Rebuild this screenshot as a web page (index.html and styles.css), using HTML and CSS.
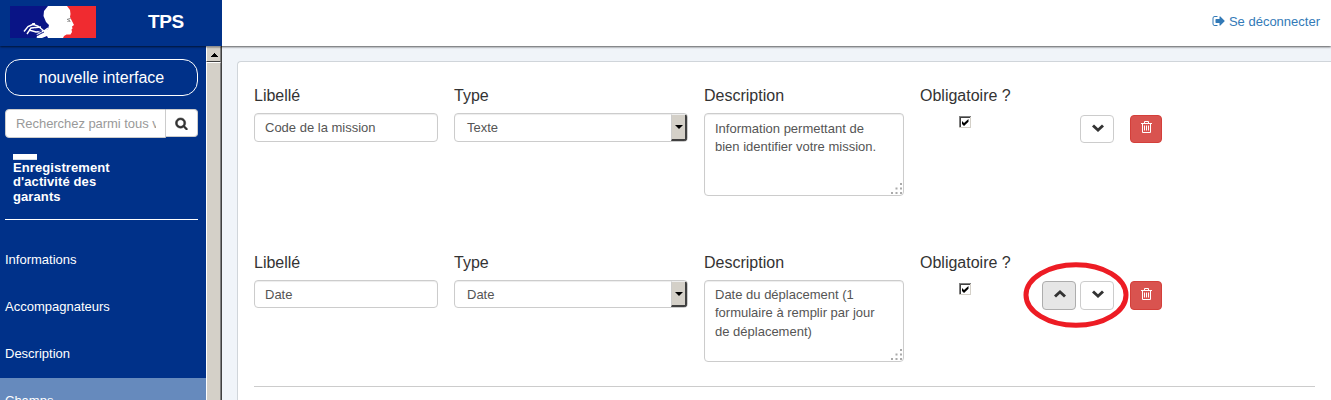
FILE: index.html
```html
<!DOCTYPE html>
<html lang="fr">
<head>
<meta charset="utf-8">
<title>TPS</title>
<link rel="stylesheet" href="styles.css">
</head>
<body>
<svg class="defs" width="0" height="0">
  <symbol id="down" viewBox="0 0 12 8"><path d="M0 2.500 2 .5 6 4.200 10 .5l2 2L6 8z" fill="#333"/></symbol>
  <symbol id="up" viewBox="0 0 12 8"><path d="M0 5.500l2 2 4-3.700 4 3.700 2-2L6 0z" fill="#333"/></symbol>
  <symbol id="trash" viewBox="0 0 11 12"><path d="M0 2.500h11M3.500 2V.5h4V2M1.500 3v8.500h8V3M3.500 4.500v5M5.500 4.500v5M7.500 4.500v5" fill="none" stroke="#fff"/></symbol>
  <symbol id="grip" viewBox="0 0 11 11"><path d="M9 0h2v2H9zM4.500 4.500h2v2h-2zM9 4.500h2v2H9zM0 9h2v2H0zM4.500 9h2v2h-2zM9 9h2v2H9z" fill="#aaa"/></symbol>
  <symbol id="check" viewBox="0 0 12 12"><path d="M0 0h12v12H0z" fill="#fff"/><path d="M0 12V0h12v1H1v11z" fill="#808080"/><path d="M1 11V1h10v1H2v9z" fill="#404040"/><path d="M11 1h1v11H0v-1h11z" fill="#d4d0c8"/><path d="M3 5l2 2 4.500-4v2.800L5 10 3 8z" fill="#000"/></symbol>
</svg>
<header class="topbar">
  <div class="brand">
    <svg class="flag" viewBox="0 0 86 32">
      <path fill="#091486" d="M0 0h45v32H0z"/><path fill="#f02b30" d="M45 0h41v32H45z"/>
      <path fill="#fff" d="M38 0h19l3 4 .5 4-.5 3 1.500 3 2.500 5-2 1.500.5 2-1 1 .5 2.500-1.500 2.500h-4l-2.500 1.500-1 2H38l-1-2-5 2h-6l5-3-5-.5 5-2.500 7-3 1-4-3-3-2.500-6 .5-5z"/>
      <path d="M14 25.500l4-5 7-3M17 28l4-6 10-1M22 18l6 2 6 5 4-3M19 24l7 2 10-1M27 31l8-4" fill="none" stroke="#fff" stroke-width="1.400"/>
      <path d="M28 29l6-3M24 23l8 3" fill="none" stroke="#17218c"/>
      <path d="M57 13.500l3.500-1M57.500 15.500l2-1 .5 1.500" fill="none" stroke="#777"/>
    </svg>
    <span class="title">TPS</span>
  </div>
  <a class="logout"><svg viewBox="0 0 1792 1792"><path fill="currentColor" d="M704 1440q0 4 1 20t.5 26.500-3 23.500-10 19.500-20.500 6.500h-320q-119 0-203.500-84.500t-84.500-203.500v-704q0-119 84.500-203.500t203.500-84.500h320q13 0 22.500 9.500t9.500 22.500q0 4 1 20t.5 26.500-3 23.500-10 19.500-20.500 6.500h-320q-66 0-113 47t-47 113v704q0 66 47 113t113 47h312l11.500 1 11.500 3 8 5.500 7 9 2 13.500zm928-544q0 26-19 45l-544 544q-19 19-45 19t-45-19-19-45v-288h-448q-26 0-45-19t-19-45v-384q0-26 19-45t45-19h448v-288q0-26 19-45t45-19 45 19l544 544q19 19 19 45z"/></svg><span>Se déconnecter</span></a>
</header>
<div class="page">
  <aside class="sidebar">
    <a class="newui">nouvelle interface</a>
    <div class="search"><div class="query"><span>Recherchez parmi tous vos dossiers</span></div><div class="go"><svg viewBox="0 0 1792 1792"><path fill="#333" stroke="#333" stroke-width="70" d="M1216 832q0-185-131.500-316.500t-316.500-131.500-316.500 131.500-131.500 316.500 131.500 316.500 316.500 131.500 316.500-131.500 131.500-316.500zm512 832q0 52-38 90t-90 38q-54 0-90-38l-343-342q-179 124-399 124-143 0-273.500-55.500t-225-150-150-225-55.500-273.500 55.500-273.500 150-225 225-150 273.500-55.500 273.500 55.500 225 150 150 225 55.500 273.500q0 220-124 399l343 343q37 37 37 90z"/></svg></div></div>
    <div class="procedure"><i class="thumb"></i>Enregistrement<br>d'activité des<br>garants</div>
    <nav class="menu"><a><span>Informations</span></a><a><span>Accompagnateurs</span></a><a><span>Description</span></a><a class="active"><span>Champs</span></a></nav>
  </aside>
  <div class="scroll"><div class="arrow"><svg viewBox="0 0 7 4"><path d="M3 0h1v1h1v1h1v1h1v1H0V3h1V2h1V1h1z"/></svg></div><div class="thumbbar"></div></div>
  <main class="content">
    <section class="panel">
      <div class="row">
        <div class="field"><label>Libellé</label><div class="input">Code de la mission</div></div>
        <div class="field"><label>Type</label><div class="input select"><span>Texte</span><i class="drop"></i></div></div>
        <div class="field"><label>Description</label><div class="input area">Information permettant de<br>bien identifier votre mission.<svg class="grip"><use href="#grip"/></svg></div></div>
        <div class="field"><label>Obligatoire ?</label><svg class="check"><use href="#check"/></svg></div>
        <div class="actions"><i class="slot"></i><div class="btn"><svg><use href="#down"/></svg></div><div class="btn danger"><svg><use href="#trash"/></svg></div></div>
      </div>
      <div class="row second">
        <div class="field"><label>Libellé</label><div class="input">Date</div></div>
        <div class="field"><label>Type</label><div class="input select"><span>Date</span><i class="drop"></i></div></div>
        <div class="field"><label>Description</label><div class="input area">Date du déplacement (1<br>formulaire à remplir par jour<br>de déplacement)<svg class="grip"><use href="#grip"/></svg></div></div>
        <div class="field"><label>Obligatoire ?</label><svg class="check"><use href="#check"/></svg></div>
        <div class="actions"><div class="btn pressed"><svg><use href="#up"/></svg></div><div class="btn"><svg><use href="#down"/></svg></div><div class="btn danger"><svg><use href="#trash"/></svg></div><svg class="highlight" viewBox="0 0 106 66"><ellipse cx="53" cy="33" rx="50" ry="30.300" fill="none" stroke="#ed1c24" stroke-width="5"/></svg></div>
      </div>
      <div class="rule"></div>
    </section>
  </main>
</div>
</body>
</html>
```
FILE: styles.css
```css
* { box-sizing: border-box; }
body { margin: 0; height: 400px; overflow: hidden; background: #f0f4f9; color: #333; font: 13px "Liberation Sans", Arial, sans-serif; }
svg { display: block; flex: none; }
.defs { position: absolute; }
.topbar { position: relative; height: 46px; display: flex; justify-content: space-between; background: #fff; box-shadow: 0 1px 2px rgba(0,0,0,.65); z-index: 1; }
.brand { width: 222px; background: #003189; display: flex; padding: 6px 0 0 10px; }
.flag { width: 86px; height: 32px; }
.title { margin: 5px 0 0 52px; color: #fff; font-size: 19px; line-height: 22px; font-weight: bold; letter-spacing: -.4px; }
.logout { display: flex; align-items: center; gap: 3px; height: 42px; padding-right: 11px; color: #337ab7; }
.logout svg { width: 14px; height: 14px; }
.page { display: flex; height: 354px; }
.sidebar { width: 206px; background: #003189; color: #fff; padding-top: 13px; overflow: hidden; }
.newui { display: block; margin: 0 8px 0 5px; height: 37px; border: 1px solid #fff; border-radius: 15px; text-align: center; font-size: 16px; line-height: 35px; }
.search { display: flex; margin: 13px 8px 0 5px; height: 29px; }
.query { width: 161px; background: #fff; border: 1px solid #ccc; border-radius: 4px 0 0 4px; color: #999; padding: 0 9px 0 10px; line-height: 28px; letter-spacing: -.05px; }
.query span { display: block; overflow: hidden; white-space: nowrap; }
.go { width: 32px; height: 28px; background: #fff; border: 1px solid #ccc; border-left: 0; border-radius: 0 4px 4px 0; display: flex; align-items: center; justify-content: center; }
.go svg { width: 13px; height: 13px; }
.procedure { margin: 16px 8px 0 5px; padding: 0 8px; height: 66px; border-bottom: 1px solid #fff; font-weight: bold; line-height: 14.4px; letter-spacing: .1px; }
.thumb { display: block; width: 24px; height: 6px; margin-bottom: 1px; background: #fff; border-bottom: 1px solid #d5e0ed; }
.menu { margin-top: 17px; }
.menu a { display: block; height: 47px; line-height: 45px; padding-left: 5px; }
.menu .active { background: #668abd; }
.scroll { width: 16px; background: #d4d0c8; border-right: 1px solid #404040; }
.arrow { height: 16px; padding: 6px 0 0 4px; border: 1px solid #fff; border-right-color: #808080; border-bottom-color: #404040; }
.arrow svg { width: 7px; height: 4px; }
.thumbbar { height: 338px; border: 1px solid #fff; border-right-color: #808080; border-bottom: 0; }
.content { flex: 1; padding: 15px 0 0 15px; }
.panel { height: 360px; background: #fff; border: 1px solid #d0d5da; border-right: 0; border-radius: 4px 0 0; padding: 24px 0 0 16px; }
.row { display: grid; grid-template-columns: 184px 234px 200px 106px 120px; column-gap: 16px; height: 167px; }
.second { height: 133px; }
label { display: block; height: 27px; font-size: 16px; line-height: 20px; }
.input { position: relative; height: 29px; border: 1px solid #ccc; border-radius: 4px; box-shadow: inset 0 1px 1px rgba(0,0,0,.075); padding: 0 10px; line-height: 28px; color: #555; }
.second .input { height: 28px; }
.select { display: flex; justify-content: space-between; padding: 0 0 0 12px; overflow: hidden; }
.drop { width: 16px; height: 27px; background: #d4d0c8; border: solid; border-width: 1px 2px 2px 1px; border-color: #eee #404040 #404040 #ccc; display: flex; align-items: center; justify-content: center; }
.second .drop { height: 26px; }
.drop::after { content: ""; border: 4px solid transparent; border-top-color: #000; border-bottom: 0; }
.area { height: 83px; padding-top: 6px; line-height: 18.4px; white-space: nowrap; }
.second .area { height: 82px; padding-top: 5px; }
.grip { position: absolute; right: 1px; bottom: 1px; width: 11px; height: 11px; }
.check { width: 12px; height: 12px; margin: 3px 0 0 39px; }
.actions { position: relative; display: flex; gap: 4px; padding-top: 29px; }
.second .actions { padding-top: 28px; }
.slot { width: 34px; }
.btn { width: 34px; height: 28px; border: 1px solid #ccc; border-radius: 4px; background: #fff; padding: 8px 0 0 11px; }
.second .btn { height: 29px; }
.btn svg { width: 12px; height: 8px; }
.pressed { background: #e6e6e6; border-color: #adadad; }
.danger { width: 32px; margin-left: 12px; background: #d9534f; border-color: #d43f3a; padding: 5px 0 0 10px; }
.second .danger { padding-top: 6px; }
.btn.danger svg { width: 11px; height: 12px; }
.btn.highlight, .highlight { position: absolute; left: -19px; top: 9px; width: 106px; height: 66px; }
.rule { width: 1061px; border-top: 1px solid #ccc; }
```
